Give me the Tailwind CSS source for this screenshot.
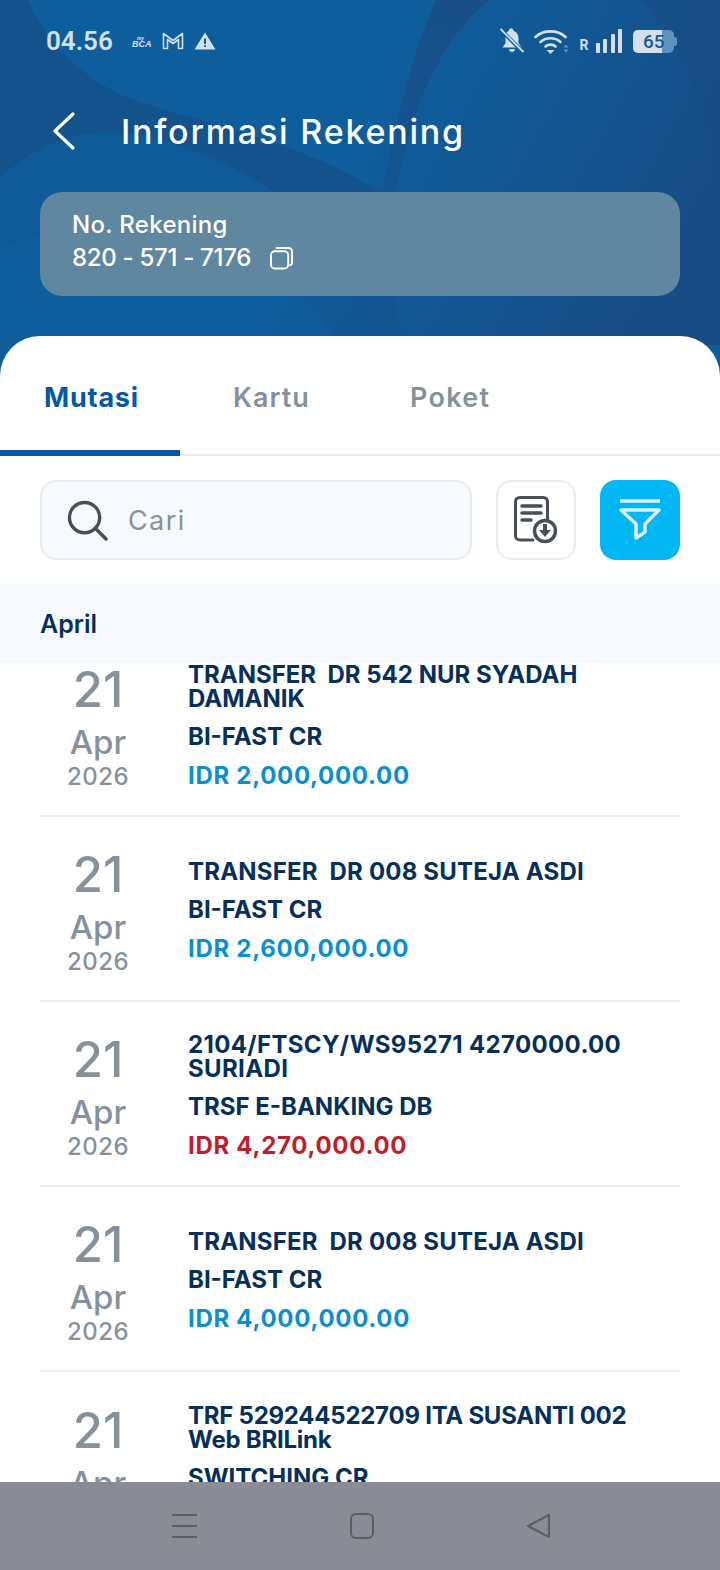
<!DOCTYPE html>
<html lang="id">
<head>
<meta charset="UTF-8">
<meta name="viewport" content="width=device-width, initial-scale=1.0">
<title>Informasi Rekening</title>
<script src="https://cdn.jsdelivr.net/npm/@tailwindcss/browser@4"></script>
</head>
<body class="bg-white font-['Inter',sans-serif]">
<div class="relative w-[720px] h-[1570px] overflow-hidden flex flex-col">

  <!-- header biru -->
  <div class="absolute top-0 left-0 w-[720px] h-[400px] bg-[#0e5e9e]">
    <svg width="720" height="400" viewBox="0 0 720 400" fill="none">
      <defs>
        <linearGradient id="bawah" gradientUnits="userSpaceOnUse" x1="330" y1="170" x2="640" y2="345"><stop offset="0" stop-color="#174c84" stop-opacity="0"/><stop offset="1" stop-color="#174c84"/></linearGradient>
        <linearGradient id="garis" gradientUnits="userSpaceOnUse" x1="0" y1="0" x2="0" y2="230"><stop offset="0" stop-color="#174f88"/><stop offset="1" stop-color="#115894"/></linearGradient>
      </defs>
      <path d="M0 0H28C45 40 75 70 115 92C175 120 300 135 392 200V345H0Z" fill="#14528c"/>
      <path d="M0 178C40 140 90 125 140 135C220 150 340 210 410 345H0Z" fill="#0f5a99"/>
      <path d="M0 250C70 215 150 215 230 250C280 275 320 310 340 345H0Z" fill="#0e5e9e"/>
      <path d="M436 0H490C440 40 410 110 396 190C390 240 392 290 400 345H380C372 270 378 190 400 110C410 70 422 30 436 0Z" fill="url(#garis)"/>
      <path d="M640 0H720V345H680C725 240 730 90 640 0Z" fill="#15528c"/>
      <rect x="0" y="0" width="720" height="345" fill="url(#bawah)"/>
    </svg>
  </div>

  <!-- status bar -->
  <div class="relative h-[82px] flex items-center pl-[46px] pr-[43px] text-[#d2e0ee]">
    <span class="font-['Roboto',sans-serif] font-semibold text-[26px] w-[86px]">04.56</span>
    <div class="flex items-center">
      <span class="font-['Liberation_Sans',sans-serif] italic font-bold text-[9px] w-[17px] leading-[8px] text-center mt-[2px]"><span class="block text-[5px] leading-[4px]">my</span>BCA</span>
      <svg class="ml-[13px]" width="22" height="18" viewBox="0 0 22 18" fill="none" stroke="currentColor" stroke-width="1.600" stroke-linejoin="round"><path d="M1.500 16.500V1.500L11 8.500L20.500 1.500V16.500H16.500V7.500L11 11.500L5.500 7.500V16.500Z"/></svg>
      <svg class="ml-[10px]" width="22" height="18" viewBox="0 0 22 18"><path fill="currentColor" fill-rule="evenodd" d="M11 .5 21.500 17.500H.5ZM10 6.500V12H12V6.500ZM10 13.200V15H12V13.200Z"/></svg>
    </div>
    <div class="ml-auto flex items-center">
      <svg width="24" height="26" viewBox="0 0 24 26"><path fill="currentColor" d="M9 2.500C9 1 10.500 0 11.800 0.500C13 .8 13.500 2 13.500 2.800C17 4 18.500 7 18.500 10V15L21.500 19.500H2.500L5.500 15V10C5.500 6.500 6.500 4 9 2.500ZM9 21H15C15 23 13.500 24 12 24S9 23 9 21Z"/><path stroke="#0e5e9e" stroke-width="4" d="M0 1 23 24"/><path stroke="currentColor" stroke-width="1.800" d="M0.500 1 23.500 24"/></svg>
      <svg class="ml-[10px]" width="35" height="26" viewBox="0 0 35 26" fill="none" stroke="currentColor" stroke-width="2.600" stroke-linecap="round"><path d="M1.500 9C9.500 1.500 23.500 1.500 31.500 9"/><path d="M6.500 14C12 9 21 9 26.500 14"/><path d="M11.500 18.500C14 16 19 16 21.500 18.500"/><path fill="currentColor" stroke="none" d="M12.500 22H20.500L16.500 26Z"/><path fill="currentColor" stroke="none" opacity=".45" d="M29 16.500 31.500 19.500H26.500ZM26.500 21.500H31.500L29 24.500Z" transform="translate(3 0)"/></svg>
      <span class="ml-[11px] font-['Roboto',sans-serif] font-bold text-[14px] mt-[9px]">R</span>
      <div class="ml-[7px] flex items-end gap-[3.5px] h-[24px]">
        <div class="w-[4px] h-[10px] bg-[#d2e0ee] rounded-[1px]"></div>
        <div class="w-[4px] h-[14px] bg-[#d2e0ee] rounded-[1px]"></div>
        <div class="w-[4px] h-[19px] bg-[#d2e0ee] rounded-[1px]"></div>
        <div class="w-[4px] h-[24px] bg-[#d2e0ee] rounded-[1px]"></div>
      </div>
      <div class="ml-[11px] flex items-center">
        <div class="relative w-[41px] h-[23px] rounded-[5px] bg-[#5e92bd] overflow-hidden">
          <div class="absolute left-0 top-0 h-full w-[29px] bg-[#d2e0ee]"></div>
          <span class="absolute left-[10px] top-0 font-['Roboto',sans-serif] font-medium text-[#155a96] text-[19px] leading-[23px]">65</span>
        </div>
        <div class="w-[3px] h-[9px] rounded-r-[2px] bg-[#5e92bd]"></div>
      </div>
    </div>
  </div>

  <!-- judul -->
  <div class="relative h-[98px] flex items-center pl-[52px]">
    <svg width="26" height="40" viewBox="0 0 26 40" fill="none" stroke="white" stroke-width="3.200" stroke-linecap="round" stroke-linejoin="round"><path d="M21 3 3 20 21 37"/></svg>
    <h1 class="ml-[43px] text-white text-[34px] font-medium tracking-[1.8px]">Informasi Rekening</h1>
  </div>

  <!-- nomor rekening -->
  <div class="relative mx-[40px] mt-[12px] h-[104px] rounded-[22px] bg-[#5f87a0] pl-[32px] pt-[16px] text-white font-medium text-[24px] leading-[33px]">
    <p class="tracking-[.3px]">No. Rekening</p>
    <div class="flex items-center">
      <span class="tracking-[-.3px]">820 - 571 - 7176</span>
      <svg class="ml-[19px]" width="23" height="24" viewBox="0 0 24 24" fill="none" stroke="white" stroke-width="2"><rect x="1" y="5" width="18" height="18" rx="4"/><path d="M6 1.500H19C21.500 1.500 23 3 23 5.500V17C23 18.500 22 19.500 20 20"/></svg>
    </div>
  </div>

  <!-- panel putih -->
  <div class="relative mt-[40px] flex-1 min-h-0 bg-white rounded-t-[40px] flex flex-col overflow-hidden">
    <div class="relative h-[120px] shrink-0 flex text-[27px] font-semibold text-[#87919b] border-b-2 border-[#e9ebee] tracking-[.8px]">
      <div class="w-[180px] pt-[42px] pl-[44px] text-[#0558a6] font-bold">Mutasi</div>
      <div class="w-[180px] pt-[42px] pl-[53px] tracking-[1px]">Kartu</div>
      <div class="pt-[42px] pl-[50px] tracking-[1.3px]">Poket</div>
      <div class="absolute left-0 -bottom-[2px] w-[180px] h-[6px] bg-[#0558a6]"></div>
    </div>

    <div class="flex px-[40px] pt-[24px] h-[128px] shrink-0">
      <div class="w-[432px] h-[80px] rounded-[16px] bg-[#f6fafe] border-2 border-[#e7ecf0] flex items-center pl-[25px]">
        <svg width="41" height="41" viewBox="0 0 42 42" fill="none" stroke="#4a4f57" stroke-width="3.500" stroke-linecap="round"><circle cx="18" cy="18" r="15.500"/><path d="M29 29 40 40"/></svg>
        <span class="ml-[20px] mt-[2px] text-[27px] text-[#87919b] tracking-[1.4px]">Cari</span>
      </div>
      <div class="ml-[24px] w-[80px] h-[80px] rounded-[16px] border-2 border-[#e9ebee] flex items-center justify-center">
        <svg width="44" height="48" viewBox="0 0 44 48" fill="none" stroke="#4a4f57" stroke-width="3" stroke-linecap="round"><path d="M19 44H6C3 44 1.500 42 1.500 40V6C1.500 3.500 3 1.500 6 1.500H29C32 1.500 33.500 3.500 33.500 6V24"/><path stroke-width="3.500" d="M8 10H27M8 17H27M8 24H17"/><circle cx="31" cy="35" r="10.500" stroke-width="3.500"/><path fill="#4a4f57" stroke="none" d="M29 28H33V34H37L31 41 25 34H29Z"/></svg>
      </div>
      <div class="ml-[24px] w-[80px] h-[80px] rounded-[16px] bg-[#00b7f4] flex items-center justify-center">
        <svg width="44" height="44" viewBox="0 0 44 44" fill="none" stroke="#dceef7" stroke-width="3.500" stroke-linejoin="round"><path d="M2 3H42"/><path d="M3 12H41L27 26V34L18 40V26Z"/></svg>
      </div>
    </div>

    <div class="relative z-10 h-[79px] shrink-0 bg-[#f6fafe] flex items-center pl-[40px] pt-[2px] text-[25px] font-semibold text-[#05305c]">April</div>

    <!-- daftar mutasi -->
    <div class="flex-1 min-h-0 overflow-hidden px-[40px] flex flex-col -mt-[31px]">
      <div class="h-[185px] shrink-0 border-b-2 border-[#eceef0] flex items-center">
        <div class="w-[116px] shrink-0 pt-[7px] text-center text-[#87919b] font-medium"><div class="text-[49px] leading-[55px]">21</div><div class="text-[33px] leading-[44px] mt-[3px]">Apr</div><div class="text-[24px] leading-[30px] -mt-[2px] tracking-[.5px]">2026</div></div>
        <div class="ml-[32px] pt-[8px] font-bold text-[#05305c] text-[24px]">
          <p class="leading-[24px]">TRANSFER &nbsp;DR 542 NUR SYADAH DAMANIK</p>
          <p class="leading-[32px] mt-[10px]">BI-FAST CR</p>
          <p class="leading-[32px] mt-[7px] text-[#0a90cd] tracking-[.7px]">IDR 2,000,000.00</p>
        </div>
      </div>
      <div class="h-[185px] shrink-0 border-b-2 border-[#eceef0] flex items-center">
        <div class="w-[116px] shrink-0 pt-[7px] text-center text-[#87919b] font-medium"><div class="text-[49px] leading-[55px]">21</div><div class="text-[33px] leading-[44px] mt-[3px]">Apr</div><div class="text-[24px] leading-[30px] -mt-[2px] tracking-[.5px]">2026</div></div>
        <div class="ml-[32px] pt-[8px] font-bold text-[#05305c] text-[24px]">
          <p class="leading-[24px] tracking-[.2px]">TRANSFER &nbsp;DR 008 SUTEJA ASDI</p>
          <p class="leading-[32px] mt-[10px]">BI-FAST CR</p>
          <p class="leading-[32px] mt-[7px] text-[#0a90cd] tracking-[.7px]">IDR 2,600,000.00</p>
        </div>
      </div>
      <div class="h-[185px] shrink-0 border-b-2 border-[#eceef0] flex items-center">
        <div class="w-[116px] shrink-0 pt-[7px] text-center text-[#87919b] font-medium"><div class="text-[49px] leading-[55px]">21</div><div class="text-[33px] leading-[44px] mt-[3px]">Apr</div><div class="text-[24px] leading-[30px] -mt-[2px] tracking-[.5px]">2026</div></div>
        <div class="ml-[32px] pt-[8px] font-bold text-[#05305c] text-[24px]">
          <p class="leading-[24px] tracking-[.35px]">2104/FTSCY/WS95271 4270000.00 SURIADI</p>
          <p class="leading-[32px] mt-[10px]">TRSF E-BANKING DB</p>
          <p class="leading-[32px] mt-[7px] text-[#bf1e2e] tracking-[.7px]">IDR 4,270,000.00</p>
        </div>
      </div>
      <div class="h-[185px] shrink-0 border-b-2 border-[#eceef0] flex items-center">
        <div class="w-[116px] shrink-0 pt-[7px] text-center text-[#87919b] font-medium"><div class="text-[49px] leading-[55px]">21</div><div class="text-[33px] leading-[44px] mt-[3px]">Apr</div><div class="text-[24px] leading-[30px] -mt-[2px] tracking-[.5px]">2026</div></div>
        <div class="ml-[32px] pt-[8px] font-bold text-[#05305c] text-[24px]">
          <p class="leading-[24px] tracking-[.2px]">TRANSFER &nbsp;DR 008 SUTEJA ASDI</p>
          <p class="leading-[32px] mt-[10px]">BI-FAST CR</p>
          <p class="leading-[32px] mt-[7px] text-[#0a90cd] tracking-[.7px]">IDR 4,000,000.00</p>
        </div>
      </div>
      <div class="h-[185px] shrink-0 flex items-center">
        <div class="w-[116px] shrink-0 pt-[7px] text-center text-[#87919b] font-medium"><div class="text-[49px] leading-[55px]">21</div><div class="text-[33px] leading-[44px] mt-[3px]">Apr</div><div class="text-[24px] leading-[30px] -mt-[2px]">&nbsp;</div></div>
        <div class="ml-[32px] pt-[8px] font-bold text-[#05305c] text-[24px]">
          <p class="leading-[24px] tracking-[-.25px]">TRF 529244522709 ITA SUSANTI 002 Web BRILink</p>
          <p class="leading-[32px] mt-[10px]">SWITCHING CR</p>
          <p class="leading-[32px] mt-[7px]">&nbsp;</p>
        </div>
      </div>
    </div>

    <!-- navigasi -->
    <div class="relative z-10 h-[88px] shrink-0 bg-[#8a8c95] flex items-center pl-[172px]">
      <svg width="25" height="26" viewBox="0 0 25 26" stroke="#5c5e66" stroke-width="2.200"><path d="M0 2H25M0 13H25M0 24H25"/></svg>
      <svg class="ml-[153px]" width="24" height="26" viewBox="0 0 24 26" fill="none" stroke="#5c5e66" stroke-width="2"><rect x="1" y="1" width="22" height="24" rx="5"/></svg>
      <svg class="ml-[151px]" width="26" height="26" viewBox="0 0 26 26" fill="none" stroke="#5c5e66" stroke-width="2.200" stroke-linejoin="round"><path d="M24 2V24L3 13Z"/></svg>
    </div>
  </div>
</div>
</body>
</html>
